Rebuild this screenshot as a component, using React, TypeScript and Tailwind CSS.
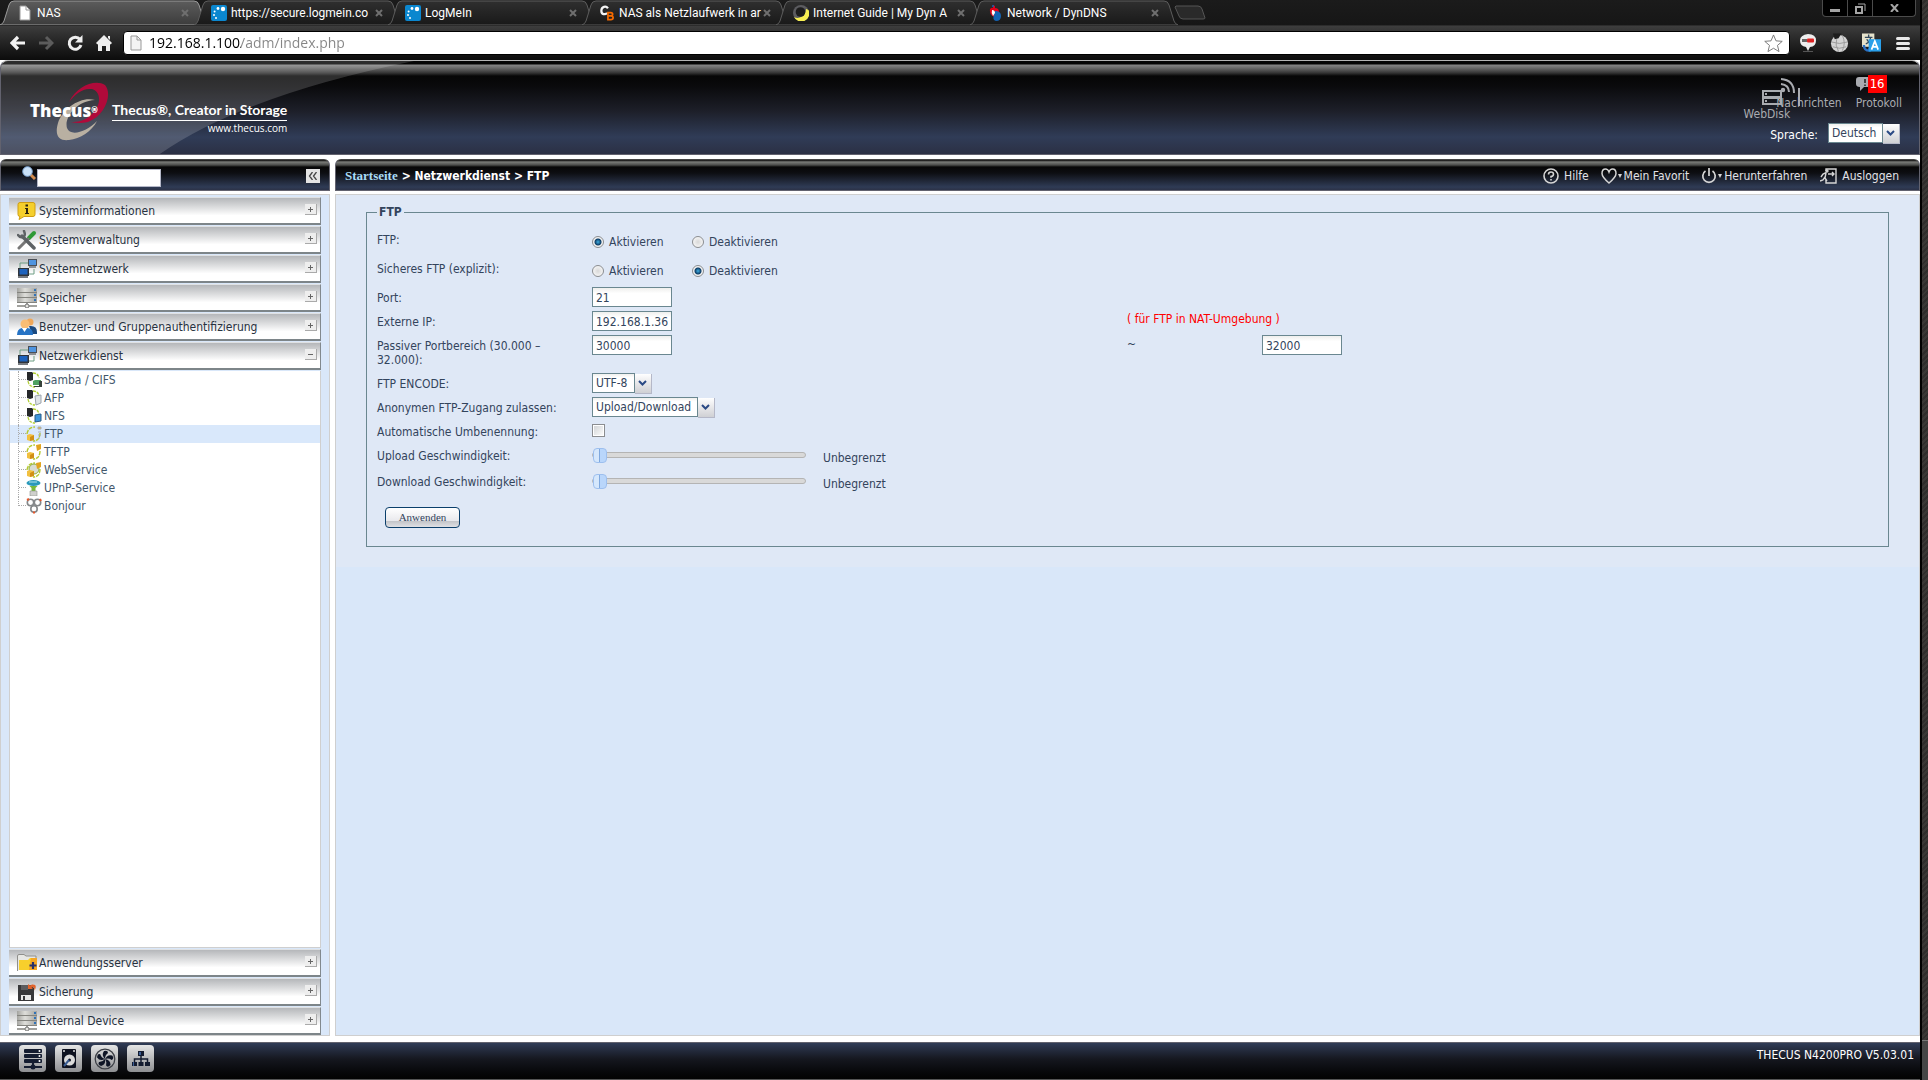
import React, { useId, useState } from 'react';
import clsx from 'clsx';

interface BrowserTab {
  title: string;
  icon: React.ReactNode;
}

interface MenuSection {
  label: string;
  icon: React.ReactNode;
}

function PageIcon({ className, fill = '#fff' }: { className?: string; fill?: string }) {
  return (
    <svg viewBox="0 0 12 16" className={className}>
      <path d="M1 1h6l4 4v10H1z" fill={fill} stroke="#999" />
      <path d="M7 1v4h4" fill="none" stroke="#999" />
    </svg>
  );
}

function LogMeInIcon() {
  return (
    <svg viewBox="0 0 16 16" className="size-4 shrink-0">
      <rect width="16" height="16" rx="2" fill="#0b87cf" />
      <circle cx="12" cy="4" r="2.2" fill="#fff" />
      <circle cx="7" cy="3.5" r="1.4" fill="#fff" />
      <circle cx="3.6" cy="6.5" r="1" fill="#fff" />
      <circle cx="3" cy="10" r="1" fill="#fff" />
      <circle cx="5" cy="13" r="1" fill="#fff" />
    </svg>
  );
}

function ComputerBaseIcon() {
  return (
    <svg viewBox="0 0 16 17" className="size-4 shrink-0" fill="none">
      <path d="M9 3.5C7 .5 2 1.5 2 6s4 4.5 6 2.5" stroke="#f4f4f4" strokeWidth="2.4" />
      <path d="M9 8v7.5h3q2.5 0 2.5-2t-2.5-2H9 12q2 0 2-1.7T12 8z" stroke="#f56a00" strokeWidth="1.8" />
    </svg>
  );
}

function DynIcon() {
  return (
    <svg viewBox="0 0 16 16" className="size-4 shrink-0">
      <circle cx="8" cy="8" r="8" fill="#5c5c60" />
      <path d="M15.5 5A8 8 0 0 1 1 12q4 2 8-.5T13 4z" fill="#f7ef52" />
      <circle cx="7.5" cy="7" r="4.8" fill="#1d1d1d" />
    </svg>
  );
}

function DynDnsIcon() {
  return (
    <svg viewBox="0 0 12 16" className="h-4 w-3 shrink-0">
      <path d="M1 4Q3 2 4 3V0l2 1v2q4 0 4 4L6 8 5 12Q0 9 1 4z" fill="#e2001a" />
      <path d="M6 6q6 0 6 5t-5 5q-4-1-2-6z" fill="#1463b4" />
      <path d="M3 5q3 0 3 3l-2 3q-2-3-1-6z" fill="#fff" />
      <path d="M4 0v2" stroke="#1463b4" strokeWidth="1.5" />
    </svg>
  );
}

function PeopleIcon() {
  return (
    <svg viewBox="0 0 20 18" className="h-[18px] w-5">
      <circle cx="13" cy="4" r="3.5" fill="#f0a85a" />
      <path d="M12 8q8-1 8 6v2h-5z" fill="#1b4a80" />
      <circle cx="8" cy="6" r="4.5" fill="#f9bd74" />
      <path d="M0 17q0-6 5-7l2.500 3L10 10q6 0 6 7z" fill="#2673c4" />
      <path d="M5 10h5l-2.500 4z" fill="#fff" />
    </svg>
  );
}

function InfoIcon() {
  return (
    <svg viewBox="0 0 20 18" className="h-[18px] w-5">
      <path d="M3 .5h13q2 0 2 2v10q0 2-2 2H7L2 17.5l1-3q-2 0-2-2v-10q0-2 2-2z" fill="#f5cf2c" stroke="#cf9d12" />
      <path d="M8.500 2.500h2.500v2H8.500zM8 6h3v5h1v1H8v-1h1V7H8z" fill="#2b2410" />
    </svg>
  );
}

function ToolsIcon() {
  return (
    <svg viewBox="0 0 20 20" className="size-5" fill="none" strokeLinecap="round">
      <path d="M17 3l-5 5" stroke="#2f9a35" strokeWidth="4" />
      <path d="M11 9l-9 9" stroke="#777" strokeWidth="3" />
      <path d="M5 6l12 12" stroke="#5e6265" strokeWidth="3.5" />
      <path d="M1 5q2 3 5 2t1-6" stroke="#5e6265" strokeWidth="2.5" />
    </svg>
  );
}

function NetworkIcon() {
  return (
    <svg viewBox="0 0 20 20" className="size-5">
      <path d="M3 10V4h8M12 15h5v-5" fill="none" stroke="#6d9d83" />
      <rect x="11" y="0" width="9" height="7" fill="#4a4f57" />
      <rect x="12" y="1" width="7" height="5" fill="#4e94e0" />
      <path d="M12 7h7v2h-7z" fill="#8b8f94" />
      <rect x="1" y="9" width="11" height="8" fill="#30343a" />
      <rect x="2.5" y="10" width="8" height="5.5" fill="#1e63bd" />
      <path d="M1 17h10v2H1z" fill="#777b80" />
    </svg>
  );
}

function StorageIcon() {
  return (
    <svg viewBox="0 0 20 20" className="size-5">
      <defs>
        <linearGradient id="rack">
          <stop offset="0" stopColor="#a3a39f" />
          <stop offset=".4" stopColor="#dededa" />
          <stop offset="1" stopColor="#a3a39f" />
        </linearGradient>
      </defs>
      {[0, 5, 10].map((y) => (
        <g key={y}>
          <rect x="0" y={y} width="20" height="5" fill="#84847f" />
          <rect x="0" y={y} width="20" height="4" fill="url(#rack)" />
          <rect x="17" y={y + 1} width="2" height="2" fill="#2f72b8" />
        </g>
      ))}
      <path d="M0 18h20M10 15v3" stroke="#84847f" strokeWidth="1.5" />
      <circle cx="10" cy="18" r="2" fill="#e4e4e0" stroke="#777" />
    </svg>
  );
}

function FolderIcon() {
  return (
    <svg viewBox="0 0 20 18" className="h-[18px] w-5">
      <path d="M.5 17V2Q.5 .5 2 .5h5L9 2h10v3" fill="#e7e7e4" stroke="#8f8f8c" />
      <path d="M2 6h9l2-2h7v12H2z" fill="#f7cf2c" />
      <path d="M14 4h6v12h-8z" fill="#f5a623" />
      <path d="M16 8v7M12.500 11.500h7" stroke="#27306b" strokeWidth="2.2" />
    </svg>
  );
}

function FloppyIcon() {
  return (
    <svg viewBox="0 0 20 18" className="h-[18px] w-5">
      <path d="M1 2h13l3 3v13H1z" fill="#38383a" />
      <path d="M4 2h7v5H4z" fill="#5c5c5f" />
      <path d="M4 12h10v5H4z" fill="#e8e8e8" />
      <path d="M6 13h2v4H6z" fill="#38383a" />
      <path d="M11 1v5h5l-1.500-1.500q3-1 3 3Q21 1 15 1.500L13 2.500z" fill="#e2632b" />
    </svg>
  );
}

function ServerLeafIcon({ kind }: { kind: 'samba' | 'afp' | 'nfs' }) {
  return (
    <svg viewBox="0 0 16 16" className="size-4">
      <path d="M2 9q1 6 7 6M7 1q5 0 6 5" fill="none" stroke="#b2cf36" strokeWidth="1.3" strokeDasharray="3 1" />
      <path d="M1 0h5l1 1v7l-3 1-3-1z" fill="#26282a" />
      {kind === 'samba' && (
        <>
          <path d="M7 9l2-1h6v5H7z" fill="#4fa262" />
          <path d="M13 9h3v6H8v-1h5z" fill="#38423c" />
        </>
      )}
      {kind === 'afp' && <path d="M9 6l6-1v8l-5 2z" fill="#e0e4e8" stroke="#9da5ad" />}
      {kind === 'nfs' && <path d="M9 7l6-1v7l-6 1z" fill="#3e97dc" stroke="#285b85" />}
    </svg>
  );
}

function TransferLeafIcon({ kind }: { kind: 'ftp' | 'tftp' | 'web' }) {
  return (
    <svg viewBox="0 0 16 16" className="size-4">
      <path d="M1 8Q2 1 9 1M14 7q0 8-7 8" fill="none" stroke="#b5c92f" strokeWidth="1.4" strokeDasharray="4 1" />
      {kind === 'web' && <circle cx="8" cy="7" r="5" fill="#d8dcd4" stroke="#8fae35" />}
      <path d="M1 9l3-1 4 1v5l-4 1-3-1z" fill="#f2c040" />
      <path d="M4 11l4-2v5l-4 1z" fill="#d18f16" />
      {kind === 'ftp' ? (
        <path d="M12 1h3v2h-3zM12 6h3M12 9h3M12 12h2" fill="#edb52a" stroke="#aab0b5" />
      ) : (
        <path d="M10 1l5-1v5l-4 2z" fill="#e2a420" />
      )}
    </svg>
  );
}

function UpnpIcon() {
  return (
    <svg viewBox="0 0 16 16" className="size-4">
      <ellipse cx="7.5" cy="3" rx="7" ry="3" fill="#2a9abb" />
      <path d="M3 2h8" stroke="#b2e4f1" />
      <path d="M3.500 6h8l-2 2v3h-4V8z" fill="#79b93b" />
      <path d="M4 11h7v5H4z" fill="#cfd0cd" stroke="#92948f" strokeWidth=".6" />
    </svg>
  );
}

function BonjourIcon() {
  return (
    <svg viewBox="0 0 16 16" className="size-4" fill="none">
      <circle cx="4.5" cy="4.5" r="3.2" stroke="#85888a" strokeWidth="1.6" />
      <circle cx="11.5" cy="4.5" r="3.2" stroke="#85888a" strokeWidth="1.6" />
      <circle cx="8" cy="11" r="3.2" stroke="#85888a" strokeWidth="1.6" />
      <path d="M1 2l2-1M14 1l1 2M7 14.500h2" stroke="#e4572b" strokeWidth="2" />
    </svg>
  );
}

const browserTabs: BrowserTab[] = [
  { title: 'NAS', icon: <PageIcon className="h-4 w-3 shrink-0" /> },
  { title: 'https://secure.logmein.co', icon: <LogMeInIcon /> },
  { title: 'LogMeIn', icon: <LogMeInIcon /> },
  { title: 'NAS als Netzlaufwerk in ar', icon: <ComputerBaseIcon /> },
  { title: 'Internet Guide | My Dyn A', icon: <DynIcon /> },
  { title: 'Network / DynDNS', icon: <DynDnsIcon /> },
];

const topSections: MenuSection[] = [
  { label: 'Systeminformationen', icon: <InfoIcon /> },
  { label: 'Systemverwaltung', icon: <ToolsIcon /> },
  { label: 'Systemnetzwerk', icon: <NetworkIcon /> },
  { label: 'Speicher', icon: <StorageIcon /> },
  { label: 'Benutzer- und Gruppenauthentifizierung', icon: <PeopleIcon /> },
];

const bottomSections: MenuSection[] = [
  { label: 'Anwendungsserver', icon: <FolderIcon /> },
  { label: 'Sicherung', icon: <FloppyIcon /> },
  { label: 'External Device', icon: <StorageIcon /> },
];

const services: MenuSection[] = [
  { label: 'Samba / CIFS', icon: <ServerLeafIcon kind="samba" /> },
  { label: 'AFP', icon: <ServerLeafIcon kind="afp" /> },
  { label: 'NFS', icon: <ServerLeafIcon kind="nfs" /> },
  { label: 'FTP', icon: <TransferLeafIcon kind="ftp" /> },
  { label: 'TFTP', icon: <TransferLeafIcon kind="tftp" /> },
  { label: 'WebService', icon: <TransferLeafIcon kind="web" /> },
  { label: 'UPnP-Service', icon: <UpnpIcon /> },
  { label: 'Bonjour', icon: <BonjourIcon /> },
];

function TabStrip() {
  return (
    <div className="flex h-[25px] items-start bg-gradient-to-b from-[#1b1b1b] to-[#161616] font-['Roboto',sans-serif] text-xs text-white">
      {browserTabs.map((tab, i) => (
        <div key={tab.title} className="relative flex h-[25px] w-[194px] shrink-0 items-center">
          <svg viewBox="0 0 208 25" className="absolute top-0 left-0 h-[25px] w-[208px]">
            <defs>
              <linearGradient id={`tab-${i}`} x1="0" y1="0" x2="0" y2="1">
                <stop offset="0" stopColor={i === 0 ? '#5c5c5c' : '#2f2f2f'} />
                <stop offset="1" stopColor={i === 0 ? '#3c3c3c' : '#191919'} />
              </linearGradient>
            </defs>
            <path
              d="M0 25q3-1 4-4L9 5q1-4 5-4h180q4 0 5 4l5 16q1 3 4 4z"
              fill={`url(#tab-${i})`}
              stroke={i === 0 ? '#9a9a9a' : '#5c5c5c'}
            />
          </svg>
          <div className="relative flex w-full items-center pr-[3px] pl-[17px]">
            <span className="mr-1 flex w-4 shrink-0 justify-center">{tab.icon}</span>
            <span className="flex-1 whitespace-nowrap">{tab.title}</span>
            <button aria-label={`${tab.title} schließen`} className="flex size-3 items-center justify-center">
              <svg viewBox="0 0 8 8" className="size-2">
                <path d="M1 1l6 6M7 1L1 7" stroke="#6f6f6f" strokeWidth="2" />
              </svg>
            </button>
          </div>
        </div>
      ))}
      <button aria-label="Neuer Tab" className="mt-[5px] ml-[10px]">
        <svg viewBox="0 0 32 15" className="h-[15px] w-8">
          <path d="M2 1h22q3 0 4 3l3 9q0 1-2 1H9q-3 0-4-3L1 2z" fill="#2a2a2a" stroke="#555" />
        </svg>
      </button>
      <div className="mr-1 ml-auto flex h-[17px] rounded-b border border-t-0 border-[#4b4b4b] bg-black">
        <button aria-label="Minimieren" className="flex w-[25px] items-center justify-center border-r border-[#4b4b4b]">
          <span className="mt-1 h-[3px] w-[10px] bg-[#a5a5a5]" />
        </button>
        <button aria-label="Wiederherstellen" className="flex w-[25px] items-center justify-center border-r border-[#4b4b4b]">
          <svg viewBox="0 0 11 11" className="size-[11px]" fill="none" stroke="#a5a5a5">
            <path d="M3 1h7v7" />
            <path d="M1 4h6v6H1z" strokeWidth="2" />
          </svg>
        </button>
        <button aria-label="Schließen" className="flex w-[42px] items-center justify-center">
          <svg viewBox="0 0 9 8" className="h-2 w-[9px]">
            <path d="M1 0l7 8M8 0L1 8" stroke="#a5a5a5" strokeWidth="2" />
          </svg>
        </button>
      </div>
    </div>
  );
}

function AddressBar() {
  return (
    <div className="flex h-[35px] items-center border-t border-[#2c2c2c] bg-gradient-to-b from-[#3d3d3d] to-[#0c0c0c] pr-[10px] pl-[10px]">
      <button aria-label="Zurück" className="mr-3">
        <svg viewBox="0 0 16 16" className="size-4">
          <path d="M8 2L2 8l6 6M2.500 8H15" fill="none" stroke="#f2f2f2" strokeWidth="3.2" />
        </svg>
      </button>
      <button aria-label="Vorwärts" className="mr-3">
        <svg viewBox="0 0 16 16" className="size-4">
          <path d="M8 2l6 6-6 6M13.500 8H1" fill="none" stroke="#5c5c5c" strokeWidth="3" />
        </svg>
      </button>
      <button aria-label="Neu laden" className="mr-3">
        <svg viewBox="0 0 18 18" className="size-[18px]">
          <path d="M14 5.500A6 6 0 1 0 15 11" fill="none" stroke="#eee" strokeWidth="3" />
          <path d="M16.500 1v7.500H9z" fill="#eee" />
        </svg>
      </button>
      <button aria-label="Startseite" className="mr-[11px]">
        <svg viewBox="0 0 16 16" className="size-4">
          <path d="M8 0l8 8-1.500 1.500L14 9v7h-4v-5H6v5H2V9l-.5.500L0 8zM12 1h2v4l-2-2z" fill="#eee" />
        </svg>
      </button>
      <form className="flex h-6 flex-1 items-center gap-[7px] rounded-sm border border-black bg-white px-[6px]">
        <PageIcon className="h-4 w-3" fill="#f4f4f4" />
        <input
          aria-label="Adresse"
          defaultValue="192.168.1.100/adm/index.php"
          className="min-w-0 flex-1 bg-[linear-gradient(to_right,#000_92px,#858585_92px)] bg-clip-text font-['Open_Sans',sans-serif] text-sm leading-5 text-transparent caret-black outline-none"
        />
        <button type="button" aria-label="Lesezeichen">
          <svg viewBox="0 0 20 20" className="size-[19px]">
            <path d="M10 1l2.600 6.200 6.600.5-5 4.300 1.600 6.500-5.800-3.500-5.800 3.500 1.600-6.500-5-4.300 6.600-.5z" fill="#fff" stroke="#777" />
          </svg>
        </button>
      </form>
      <div className="ml-[9px] flex items-center gap-[13px]">
        <button aria-label="YouTube">
          <svg viewBox="0 0 18 20" className="h-5 w-[18px]">
            <path d="M9 1q8 0 8 6.500T11 14l-2 4-2-4Q1 13 1 7.500T9 1z" fill="#eee" />
            <rect x="3" y="6" width="5" height="3" fill="#666" />
            <rect x="8" y="5.5" width="7" height="4" rx="1" fill="#d22" />
            <path d="M4 18.500h10" stroke="#555" />
          </svg>
        </button>
        <button aria-label="Wikipedia">
          <svg viewBox="0 0 20 20" className="h-5 w-[19px]">
            <circle cx="10" cy="10.5" r="9" fill="#d4d4d4" />
            <path d="M3 0h9l-3 5-4 1z" fill="#1d1d1d" />
            <path d="M2 9q8 3 16 0M3 14q7 3 14 0M7 6q-2 6 2 13M13 2q4 8 0 16" fill="none" stroke="#9a9a9a" />
          </svg>
        </button>
        <button aria-label="Übersetzer">
          <svg viewBox="0 0 20 20" className="h-5 w-[19px]">
            <rect width="13" height="14" fill="#e6e2cb" />
            <path d="M3 4h8M7 1v3M4 11q5-2 5-7M5 6q2 4 6 5" stroke="#34495e" fill="none" strokeWidth="1.4" />
            <path d="M2 12q0 6 6 6v-3" fill="none" stroke="#2b6fc2" strokeWidth="2.5" />
            <rect x="7" y="6" width="13" height="13" fill="#2aa0ea" />
            <path d="M10 17l3.500-9 3.500 9M11 14h5" fill="none" stroke="#fff" strokeWidth="1.8" />
          </svg>
        </button>
        <button aria-label="Menü" className="ml-[2px] flex w-[14px] flex-col gap-[2px]">
          <span className="h-[3px] rounded-sm bg-[#e8e8e8]" />
          <span className="h-[3px] rounded-sm bg-[#e8e8e8]" />
          <span className="h-[3px] rounded-sm bg-[#e8e8e8]" />
        </button>
      </div>
    </div>
  );
}

function Logo() {
  return (
    <div className="relative flex items-start pt-[22px] pl-[29px] text-white">
      <svg viewBox="0 0 56 60" className="absolute top-[21px] left-[54px] h-[60px] w-14">
        <path d="M14 20C22 4 40-3 50 3c8 9 0 31-17 37q-9 2-17 0 12 1 21-8C48 21 45 8 36 7 28 6 20 12 14 20z" fill="#b00a3a" />
        <path d="M40 18C26 14 8 26 3 41c-4 14 2 18 11 17 11-1 23-9 28-19-10 11-27 16-30 7-3-10 9-27 28-28z" fill="#b9b0a2" />
      </svg>
      <span className="relative mt-[18px] w-[82px] font-['Open_Sans',sans-serif] text-[17px] leading-5 font-extrabold">
        Thecus<sup className="text-[8px]">®</sup>
      </span>
      <span className="relative mt-[17px] flex flex-col text-right font-['Lato',sans-serif]">
        <span className="border-b border-white pb-px text-sm leading-[19px] font-bold">Thecus®, Creator in Storage</span>
        <span className="font-['Open_Sans',sans-serif] text-[10px] leading-[14px]">www.thecus.com</span>
      </span>
    </div>
  );
}

interface ComboProps {
  id: string;
  value: string;
  className: string;
}

function Combo({ id, value, className }: ComboProps) {
  return (
    <span className="flex items-start">
      <select
        id={id}
        className={clsx(
          'h-5 appearance-none border border-[#6a8790] bg-white bg-gradient-to-b from-[#f0f0ee] from-0% to-white to-20% px-[3px] leading-[18px] text-[#33445c]',
          className
        )}
      >
        <option>{value}</option>
      </select>
      <span className="mt-px flex h-5 w-[17px] items-center justify-center border-r border-b border-[#b5b8c8] bg-gradient-to-b from-white to-[#cfd0d4]">
        <svg viewBox="0 0 9 6" className="mr-px mb-[2px] h-[6px] w-[9px]">
          <path d="M1 1l3.500 3.500L8 1" fill="none" stroke="#2b4a85" strokeWidth="2" />
        </svg>
      </span>
    </span>
  );
}

function AppHeader() {
  return (
    <header className="relative flex h-[95px] shrink-0 justify-between overflow-hidden rounded-t-lg border border-[#62626e] border-t-[#b5b5b5] bg-[linear-gradient(to_bottom,#050505_0px,#050505_3px,#858585_4px,#6a6a6a_7px,#333_12px,#060606_15px,#0a0a0c_25px,#1d1f29_50px,#303c57_76px,#2b3044_93px)]">
      <svg viewBox="0 0 420 95" className="absolute top-0 left-0 h-[95px] w-[420px]">
        <path d="M0 0h413Q240 35 156 95H0z" fill="#fff" fillOpacity=".16" />
      </svg>
      <Logo />
      <div className="relative flex flex-col items-end pt-[17px] pr-[17px] text-[#a9abb0]">
        <nav className="flex items-start text-xs leading-[14px]">
          <a href="#webdisk" className="-mr-[14px] flex flex-col pt-3">
            <svg viewBox="0 0 20 15" className="ml-[18px] h-[15px] w-5" fill="none" stroke="#a9abb0" strokeWidth="2">
              <path d="M1 1h18v6H1zM1 8h18v6H1zM3 4h2M3 11h2" />
            </svg>
            <span className="pt-[2px]">WebDisk</span>
          </a>
          <a href="#nachrichten" className="mr-[14px] flex flex-col">
            <span className="flex items-start">
              <svg viewBox="0 0 16 16" className="ml-1 size-4" fill="none" stroke="#a9abb0" strokeWidth="2">
                <path d="M1 1q13 1 13 14M1 6q8 1 8 8" />
                <circle cx="3" cy="12" r="1.2" fill="#a9abb0" />
              </svg>
              <span className="mt-[10px] -mb-5 ml-[2px] h-[18px] w-[2px] bg-[#a9abb0]" />
            </span>
            <span className="pt-[2px]">Nachrichten</span>
          </a>
          <a href="#protokoll" className="flex flex-col">
            <span className="-mt-[3px] flex items-center">
              <svg viewBox="0 0 12 14" className="h-[14px] w-3">
                <path d="M3 0h9v10H8l-4 4v-4Q0 10 0 7V3q0-3 3-3z" fill="#a9abb0" />
                <path d="M9 2v4M9 7.500v1.500" stroke="#222" strokeWidth="1.5" />
              </svg>
              <span className="bg-[#f00] px-[2px] text-[13px] leading-[18px] text-white">16</span>
            </span>
            <span className="pt-[3px]">Protokoll</span>
          </a>
        </nav>
        <div className="mt-[2px] mr-[2px] flex items-start text-xs">
          <label htmlFor="sprache" className="mr-[10px] pt-[5px] leading-[14px] text-white">
            Sprache:
          </label>
          <Combo id="sprache" value="Deutsch" className="w-[55px]" />
        </div>
      </div>
    </header>
  );
}

function Caret() {
  return (
    <svg viewBox="0 0 6 6" className="mr-px size-[6px]">
      <path d="M1 1h4L3 5z" fill="#d5d5d5" />
    </svg>
  );
}

function ActionLinks() {
  return (
    <nav className="flex items-center pt-[2px] text-xs text-[#e2e2e6]">
      <a href="#hilfe" className="mr-3 flex items-center gap-[5px]">
        <svg viewBox="0 0 16 16" className="size-4" fill="none" stroke="#d5d5d5" strokeWidth="1.6">
          <circle cx="8" cy="8" r="7" />
          <path d="M5.500 6.500Q5.500 4 8 4t2.500 2.200Q10.500 8 8 8.500v1.200M8 11v1.500" />
        </svg>
        Hilfe
      </a>
      <a href="#favorit" className="mr-3 flex items-center">
        <svg viewBox="0 0 16 16" className="size-4" fill="none" stroke="#d5d5d5" strokeWidth="1.5">
          <path d="M8 15Q1 9 1 5.500 1 1 4.500 1 7 1 8 4q1-3 3.500-3Q15 1 15 5.500 15 9 8 15z" />
        </svg>
        <Caret />
        Mein Favorit
      </a>
      <a href="#herunterfahren" className="mr-[13px] flex items-center">
        <svg viewBox="0 0 16 16" className="size-4" fill="none" stroke="#d5d5d5" strokeWidth="1.7">
          <path d="M4.500 3a6.200 6.200 0 1 0 7 0M8 0v8" />
        </svg>
        <Caret />
        Herunterfahren
      </a>
      <a href="#ausloggen" className="flex items-center gap-[5px]">
        <svg viewBox="0 0 17 16" className="h-4 w-[17px]" fill="none" stroke="#d5d5d5" strokeWidth="1.4">
          <path d="M6 3V1h10v14H6v-3" />
          <path d="M8 6h6M12 4l2 2-2 2M6.500 4.500L3 6 1 9M6 5l-1 5 2 3M5 9l-2 3-3 1" />
          <circle cx="7" cy="3" r="1" fill="#d5d5d5" />
        </svg>
        Ausloggen
      </a>
    </nav>
  );
}

function PanelBar({ children, className }: { children: React.ReactNode; className?: string }) {
  return (
    <div
      className={clsx(
        'flex h-8 items-center rounded-t-md border border-[#62626e] border-t-[#444] bg-[linear-gradient(to_bottom,#050505_0px,#7a7c78_2px,#4b4c4a_5px,#070707_7px,#0d0e12_13px,#2f3b55_27px,#2b3044_31px)]',
        className
      )}
    >
      {children}
    </div>
  );
}

function SectionHeader({ section, expanded = false }: { section: MenuSection; expanded?: boolean }) {
  return (
    <button
      aria-expanded={expanded}
      className="mb-px flex h-7 w-full shrink-0 items-center border-t border-r border-b-2 border-t-[#dfe1e3] border-r-[#82898d] border-b-[#7d8589] bg-gradient-to-b from-[#b5b7ba] from-0% to-white to-70% pr-[3px] pl-2 text-left text-[#28323f] last:mb-0"
    >
      <span className="flex w-[22px] shrink-0 items-center">{section.icon}</span>
      <span className="flex-1 whitespace-nowrap">{section.label}</span>
      <span className="mb-[2px] flex h-[11px] w-3 items-center justify-center border-r border-b border-[#aaa] bg-[#eee]">
        <svg viewBox="0 0 7 7" className="size-[7px]">
          <path d={expanded ? 'M1 3.500h5' : 'M1 3.500h5M3.500 1v5'} stroke="#666" />
        </svg>
      </span>
    </button>
  );
}

function Sidebar() {
  const [active, setActive] = useState('FTP');

  return (
    <aside className="flex w-[330px] shrink-0 flex-col">
      <PanelBar className="justify-between pr-[9px] pl-5">
        <label className="flex items-center">
          <svg viewBox="0 0 14 14" className="mb-[4px] h-[14px] w-4">
            <path d="M8 8l5 5" stroke="#d28c4e" strokeWidth="3" />
            <circle cx="5.5" cy="5.5" r="4.8" fill="#c9e1f8" stroke="#7da5d3" />
          </svg>
          <input aria-label="Suche" className="mt-[6px] h-[18px] w-[124px] border border-[#b5b8c8] bg-white px-1 text-xs" />
        </label>
        <button aria-label="Menü einklappen" className="mt-[2px] flex size-[14px] items-center justify-center bg-[#e4e4e4]">
          <svg viewBox="0 0 10 8" className="h-2 w-[10px]" fill="none" stroke="#444" strokeWidth="1.3">
            <path d="M4.500 0l-3 4 3 4M8.500 0l-3 4 3 4" />
          </svg>
        </button>
      </PanelBar>
      <div className="mt-[3px] flex flex-1 flex-col border border-[#cfcfcf] bg-[#d9e7f9] pt-[2px] pr-2 pl-2">
        {topSections.map((section) => (
          <SectionHeader key={section.label} section={section} />
        ))}
        <SectionHeader section={{ label: 'Netzwerkdienst', icon: <NetworkIcon /> }} expanded />
        <ul className="mb-px flex-1 border border-t-0 border-[#cfcfcf] bg-white">
          {services.map((service, i) => (
            <li key={service.label}>
              <a
                href={`#${service.label}`}
                onClick={() => setActive(service.label)}
                className={clsx(
                  'flex h-[18px] items-center pl-2 leading-[18px] text-[#42576b]',
                  active === service.label && 'bg-[#d9e8fb]'
                )}
              >
                <span
                  className={clsx(
                    'w-2 self-stretch border-l border-dotted border-[#aaa]',
                    i === services.length - 1 && 'mb-[9px]'
                  )}
                >
                  <span className="block h-[9px] border-b border-dotted border-[#aaa]" />
                </span>
                <span className="mr-[2px]">{service.icon}</span>
                {service.label}
              </a>
            </li>
          ))}
        </ul>
        {bottomSections.map((section) => (
          <SectionHeader key={section.label} section={section} />
        ))}
      </div>
    </aside>
  );
}

interface FormRowProps {
  label: string;
  htmlFor?: string;
  className: string;
  children: React.ReactNode;
}

function FormRow({ label, htmlFor, className, children }: FormRowProps) {
  return (
    <div className={clsx('flex items-start pt-[2px]', className)}>
      <label htmlFor={htmlFor} className="w-[215px] shrink-0 pt-1 pr-8 leading-[14px]">
        {label}
      </label>
      {children}
    </div>
  );
}

function RadioGroup({ name, enabled }: { name: string; enabled: boolean }) {
  return (
    <div className="flex pt-[6px]">
      {['Aktivieren', 'Deaktivieren'].map((option, i) => (
        <label key={option} className="flex w-[100px] items-center gap-[5px] leading-[14px]">
          <input
            type="radio"
            name={name}
            defaultChecked={enabled ? i === 0 : i === 1}
            className="size-3 appearance-none rounded-full border border-[#8b8d90] bg-[radial-gradient(circle,#d8d8d8,#fff)] checked:bg-[radial-gradient(circle,#3fb0e4_0px,#0d3c66_3px,#f2f2f2_4px)]"
          />
          {option}
        </label>
      ))}
    </div>
  );
}

function TextField({ id, value, label }: { id?: string; value: string; label?: string }) {
  return (
    <input
      id={id}
      type="text"
      aria-label={label}
      defaultValue={value}
      className="h-5 w-20 border border-[#6a8790] bg-white bg-gradient-to-b from-[#efefed] from-0% to-white to-30% px-[3px] pt-px leading-[17px]"
    />
  );
}

function SpeedRow({ label }: { label: string }) {
  const id = useId();
  return (
    <FormRow label={label} htmlFor={id} className="h-[26px]">
      <input
        id={id}
        type="range"
        defaultValue={0}
        className="mt-[2px] h-[15px] w-[214px] appearance-none bg-transparent [&::-webkit-slider-runnable-track]:h-[6px] [&::-webkit-slider-runnable-track]:rounded-sm [&::-webkit-slider-runnable-track]:border [&::-webkit-slider-runnable-track]:border-[#b4b4b4] [&::-webkit-slider-runnable-track]:bg-[#d9d9d9] [&::-webkit-slider-thumb]:-mt-[5px] [&::-webkit-slider-thumb]:h-[15px] [&::-webkit-slider-thumb]:w-[14px] [&::-webkit-slider-thumb]:appearance-none [&::-webkit-slider-thumb]:rounded-sm [&::-webkit-slider-thumb]:border [&::-webkit-slider-thumb]:border-[#9dbfee] [&::-webkit-slider-thumb]:bg-[linear-gradient(to_right,#d5e7fc_5px,#7fa8de_5px,#7fa8de_6px,#b9d6fb_6px)]"
      />
      <output htmlFor={id} className="pt-[6px] pl-[17px] leading-[14px]">
        Unbegrenzt
      </output>
    </FormRow>
  );
}

function FtpForm() {
  return (
    <form className="bg-[#dfe8f6] px-[30px] pt-[9px] pb-5">
      <fieldset className="border border-[#6a8790] px-[10px] pb-[18px] text-xs text-[#33445c]">
        <legend className="px-[2px] leading-4 font-bold">FTP</legend>
        <div className="pt-[7px]">
          <FormRow label="FTP:" className="h-[29px]">
            <RadioGroup name="ftp" enabled />
          </FormRow>
          <FormRow label="Sicheres FTP (explizit):" className="h-[29px]">
            <RadioGroup name="secure-ftp" enabled={false} />
          </FormRow>
          <FormRow label="Port:" htmlFor="port" className="h-6">
            <TextField id="port" value="21" />
          </FormRow>
          <FormRow label="Externe IP:" htmlFor="extern" className="h-6">
            <TextField id="extern" value="192.168.1.36" />
            <span className="ml-[455px] pt-px leading-[14px] text-[#f00]">( für FTP in NAT-Umgebung )</span>
          </FormRow>
          <FormRow label="Passiver Portbereich (30.000 – 32.000):" htmlFor="passiv-von" className="h-[38px]">
            <TextField id="passiv-von" value="30000" />
            <span className="ml-[455px] w-[135px] pt-[2px] leading-[14px]">~</span>
            <TextField value="32000" label="Passiver Portbereich bis" />
          </FormRow>
          <FormRow label="FTP ENCODE:" htmlFor="encode" className="h-6">
            <Combo id="encode" value="UTF-8" className="w-[43px]" />
          </FormRow>
          <FormRow label="Anonymen FTP-Zugang zulassen:" htmlFor="anonym" className="h-6">
            <Combo id="anonym" value="Upload/Download" className="w-[106px]" />
          </FormRow>
          <FormRow label="Automatische Umbenennung:" htmlFor="umbenennen" className="h-6">
            <input
              id="umbenennen"
              type="checkbox"
              className="mt-[3px] size-[13px] appearance-none border border-[#8b8d90] bg-gradient-to-br from-[#cfd1d3] to-white ring-1 ring-white ring-inset checked:bg-[#2b4a85]"
            />
          </FormRow>
          <SpeedRow label="Upload Geschwindigkeit:" />
          <SpeedRow label="Download Geschwindigkeit:" />
          <button
            type="button"
            className="mt-3 ml-2 h-[21px] w-[75px] rounded-sm border border-[#0b3f6b] bg-[linear-gradient(to_bottom,#fff,#e8e8ec_70%,#c4c6ca_71%,#e0e0e4)] font-['Liberation_Serif',serif] text-[11px]"
          >
            Anwenden
          </button>
        </div>
      </fieldset>
    </form>
  );
}

function StatusButton({ label, children }: { label: string; children: React.ReactNode }) {
  return (
    <button
      aria-label={label}
      className="flex size-[27px] items-center justify-center rounded bg-gradient-to-b from-[#e6e6e6] to-[#8e8f92]"
    >
      <svg viewBox="0 0 22 22" className="size-[22px]">
        {children}
      </svg>
    </button>
  );
}

function StatusBar() {
  return (
    <footer className="mt-[6px] flex h-[38px] shrink-0 items-start justify-between border-t border-b border-t-[#62626e] border-b-[#555] bg-gradient-to-b from-[#303c57] via-[#15171f] via-45% to-[#030303] pt-[2px] pr-[6px] pl-[19px]">
      <div className="flex gap-[9px]">
        <StatusButton label="RAID">
          {[1, 6, 11].map((y) => (
            <g key={y}>
              <rect x="2" y={y} width="18" height="4" rx="1" fill="#141c30" />
              <circle cx="17.5" cy={y + 2} r="1" fill="#fff" />
            </g>
          ))}
          <path d="M2 19h18M11 15v4" stroke="#141c30" strokeWidth="2.2" />
          <circle cx="11" cy="19" r="2.5" fill="#141c30" />
        </StatusButton>
        <StatusButton label="Festplatte">
          <rect x="4" y="1" width="14" height="19" rx="1" fill="#0e1220" />
          <circle cx="11.5" cy="12" r="5.5" fill="#dadada" />
          <circle cx="11.5" cy="12" r="1.5" fill="#0e1220" />
          <path d="M6 18l5-6" stroke="#3a5d94" strokeWidth="2" />
          <circle cx="6" cy="3" r="1" fill="#ddd" />
          <circle cx="16" cy="3" r="1" fill="#ddd" />
        </StatusButton>
        <StatusButton label="Lüfter">
          <circle cx="11" cy="11" r="9.8" fill="none" stroke="#3c3f46" strokeWidth="1.3" />
          {[0, 72, 144, 216, 288].map((angle) => (
            <path key={angle} d="M11 11Q7 7 10 3q4-1 4 2-3 2-3 6z" fill="#0f1526" transform={`rotate(${angle} 11 11)`} />
          ))}
        </StatusButton>
        <StatusButton label="Netzwerk">
          <path d="M8 3h6v5H8zM2 14h5v4H2zM8.500 14h5v4h-5zM15 14h5v4h-5z" fill="#141c30" />
          <path d="M11 8v6M4.500 14v-3h13v3" fill="none" stroke="#141c30" strokeWidth="1.5" />
          <path d="M3 14h1v4H3zM9 4h2v3H9z" fill="#3a5d94" />
        </StatusButton>
      </div>
      <span className="pt-[2px] text-xs leading-4 text-white">THECUS N4200PRO V5.03.01</span>
    </footer>
  );
}

export default function App() {
  return (
    <div className="flex h-screen bg-[#353331]">
      <div className="flex min-w-0 flex-1 flex-col bg-white font-['DejaVu_Sans_Condensed','DejaVu_Sans',sans-serif] text-xs">
        <TabStrip />
        <AddressBar />
        <AppHeader />
        <main className="mt-1 flex flex-1 gap-[5px]">
          <Sidebar />
          <section className="flex min-w-0 flex-1 flex-col">
            <PanelBar className="justify-between pr-5 pl-[9px]">
              <nav className="flex items-center gap-1 pt-[2px] font-bold text-white">
                <a href="#start" className="font-['Liberation_Serif',serif] text-[13px] text-[#a9dcf5]">
                  Startseite
                </a>
                <span>&gt; Netzwerkdienst &gt; FTP</span>
              </nav>
              <ActionLinks />
            </PanelBar>
            <div className="mt-[3px] flex-1 border border-[#cfcfcf] bg-[#d9e7f9]">
              <FtpForm />
            </div>
          </section>
        </main>
        <StatusBar />
      </div>
      <div className="flex w-2 flex-col border-l-2 border-black bg-[repeating-linear-gradient(135deg,#3a3836_0px,#3a3836_2px,#2f2d2c_2px,#2f2d2c_4px)]">
        <div className="mt-auto h-10 border-t border-[#777] bg-[#464646]" />
      </div>
    </div>
  );
}
